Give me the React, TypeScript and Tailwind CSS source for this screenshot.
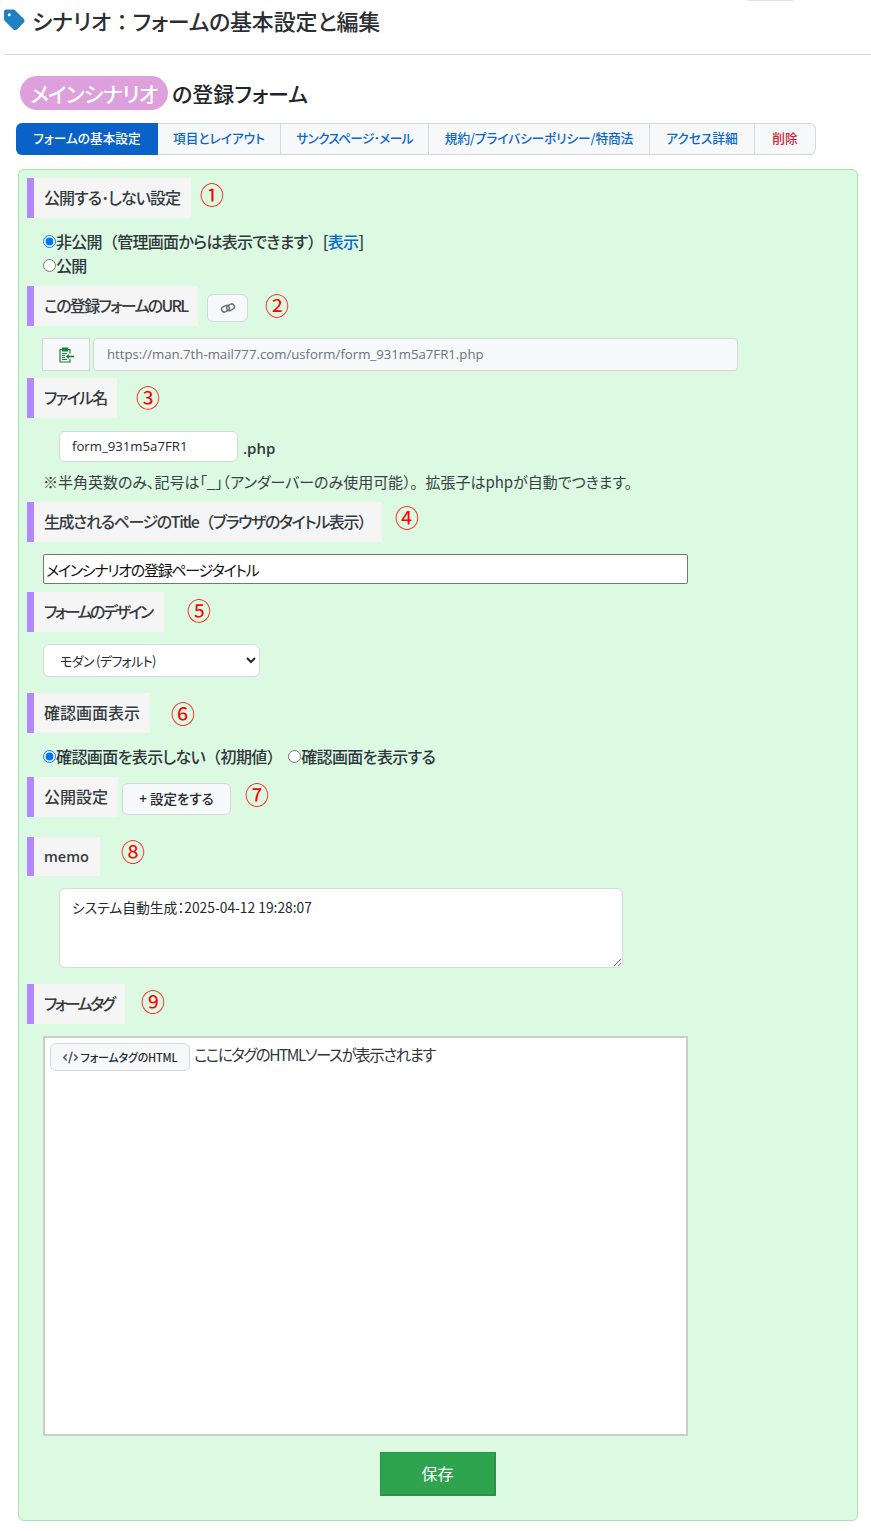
import React from "react";
import { FaTag, FaCode } from "react-icons/fa6";

const font = "[font-family:'Noto_Sans_CJK_JP','Open_Sans',sans-serif] [font-feature-settings:'palt']";

function Full({ children }: { children: string }) {
  return <span className="[font-feature-settings:normal]">{children}</span>;
}

function Num({ children, cls }: { children: string; cls: string }) {
  return <span className={`${cls} text-[24px] font-normal leading-none text-[#ff0000]`}>{children}</span>;
}

function Label({ label, w, h = "h-10", tone }: { label: React.ReactNode; w: string; h?: string; tone: string }) {
  return (
    <h4 className={`flex items-center ${w} ${h} shrink-0 whitespace-nowrap border-l-[7px] border-[#b388ff] bg-[#f5f5f5] pb-[3px] pl-[10px] font-medium leading-none text-[#333a40] ${tone}`}>{label}</h4>
  );
}

function Radio({ checked, name }: { checked?: boolean; name: string }) {
  return <input type="radio" name={name} defaultChecked={checked} className="m-0 h-[13px] w-[13px] shrink-0" />;
}

const tabs = [
  { t: "項目とレイアウト", c: "w-[123px]" },
  { t: "サンクスページ･メール", c: "w-[148px] tracking-[-0.7px]" },
  { t: "規約/プライバシーポリシー/特商法", c: "w-[221px] tracking-[-0.1px]" },
  { t: "アクセス詳細", c: "w-[105px]" },
];

export default function App() {
  return (
    <div className={`relative h-[1531px] w-[871px] overflow-hidden bg-white text-[#212529] ${font}`}>
      <div className="absolute left-[747px] top-0 h-px w-[46px] bg-[#dee2e6]" />
      <div className="flex h-[54px] items-start pl-[4px] pt-[8px]">
        <FaTag className="h-[24px] w-[21px] text-[#2080c0]" />
        <h1 className="-mt-[1px] ml-[7px] whitespace-nowrap text-[22px] font-medium leading-[26px] tracking-[-0.2px] text-[#2b2f33]">シナリオ<Full>：</Full>フォームの基本設定と編集</h1>
      </div>
      <div className="ml-[4px] h-px bg-[#d2d8de]" />

      <div className="ml-[20px] mt-[21px] flex h-[34px] items-center">
        <span className="flex h-[34px] w-[148px] items-center justify-center whitespace-nowrap rounded-[17px] bg-[#dda0dd] text-[21px] font-medium leading-none tracking-[-0.6px] text-white">メインシナリオ</span>
        <span className="ml-[4px] whitespace-nowrap text-[21px] font-medium leading-none text-[#212529]">の登録フォーム</span>
      </div>

      <nav className="ml-[16px] mt-[13px] flex h-[32px] w-[800px] text-[12.7px] font-medium leading-none">
        <a className="flex w-[142px] items-center justify-center rounded-l-[6px] bg-[#0a62c9] pb-[1px] text-white">フォームの基本設定</a>
        {tabs.map((tab) => (
          <a key={tab.t} className={`flex ${tab.c} items-center justify-center border-y border-r border-[#d5d9de] bg-[#f6f8fa] pb-[1px] text-[#0a66d0]`}>{tab.t}</a>
        ))}
        <a className="flex w-[61px] items-center justify-center rounded-r-[6px] border-y border-r border-[#d5d9de] bg-[#f6f8fa] pb-[1px] text-[#cf222e]">削除</a>
      </nav>

      <main className="ml-[18px] mt-[14px] h-[1352px] w-[840px] rounded-[6px] border border-[#a3e4b0] bg-[#dcf9e2] pl-[8px] pt-[8px]">
        <div className="flex items-start">
          <Label label="公開する･しない設定" w="w-[164px]" tone="text-[16px] tracking-[-0.9px]" />
          <Num cls="ml-[9px] mt-[4px]">①</Num>
        </div>
        <div className="ml-[16px] mt-[11px] text-[16px] font-medium leading-[24px] tracking-[-0.7px] text-[#30363c]">
          <label className="flex items-center whitespace-nowrap"><Radio checked name="pub" /><span>非公開<Full>（</Full>管理画面からは表示できます<Full>）</Full>[<a className="text-[#0a66d0]">表示</a>]</span></label>
          <label className="flex items-center"><Radio name="pub" /><span>公開</span></label>
        </div>

        <div className="mt-[9px] flex items-start">
          <Label label="この登録フォームのURL" w="w-[171px]" tone="text-[16px] tracking-[-1.7px]" />
          <button className="ml-[9px] mt-[8px] flex h-[28px] w-[41px] items-center justify-center rounded-[6px] border border-[#d5d9de] bg-[#f6f8fa]">
            <svg viewBox="0 0 16 12" className="h-[12px] w-[16px]" fill="none" stroke="#6a737d" strokeWidth="1.5">
              <rect x="1.5" y="4" width="8" height="5.4" rx="2.7" transform="rotate(-28 5.5 6.7)" />
              <rect x="6.5" y="2.6" width="8" height="5.4" rx="2.7" transform="rotate(-28 10.5 5.3)" />
            </svg>
          </button>
          <Num cls="ml-[17px] mt-[7px]">②</Num>
        </div>

        <div className="ml-[15px] mt-[12px] flex h-[33px]">
          <button className="flex w-[48px] items-center justify-center border border-[#d5d9de] bg-[#f6f8fa]">
            <svg viewBox="0 0 15 16" className="h-[16px] w-[15px]" fill="none" stroke="#1a7f37" strokeWidth="1.2">
              <path d="M3.5 2.5H1v12.5h10v-3M8.5 2.5H11v4" />
              <path d="M3.5 1.2h5v2.6h-5z" fill="#1a7f37" />
              <path d="M3 6.5h5M3 8.5h3M3 10.5h3M3 12.5h5" strokeWidth="1" />
              <path d="M15 9.5H8.5" strokeWidth="1.6" />
              <path d="M9.8 7 6.8 9.5l3 2.5z" fill="#1a7f37" stroke="none" />
            </svg>
          </button>
          <input readOnly value="https://man.7th-mail777.com/usform/form_931m5a7FR1.php" className="ml-[3px] w-[645px] rounded-[4px] border border-[#d5d9de] bg-[#f6f8fa] pl-[13px] text-[13.2px] text-[#6a737d] [font-family:'Open_Sans',sans-serif]" />
        </div>

        <div className="mt-[7px] flex items-start">
          <Label label="ファイル名" w="w-[90px]" tone="text-[16px] tracking-[-1.8px]" />
          <Num cls="ml-[19px] mt-[7px]">③</Num>
        </div>

        <div className="ml-[32px] mt-[13px] flex items-end">
          <input readOnly value="form_931m5a7FR1" className="h-[31px] w-[179px] rounded-[6px] border border-[#d5d9de] bg-white pb-[2px] pl-[12px] text-[13.2px] text-[#24292f] [font-family:'Open_Sans',sans-serif]" />
          <span className="mb-[2px] ml-[5px] text-[15px] font-semibold leading-[24px] text-[#30363c] [font-family:'Open_Sans',sans-serif]">.php</span>
        </div>
        <p className="ml-[16px] mt-[10px] whitespace-nowrap text-[15px] leading-[20px] tracking-[-0.02px] text-[#3a4046]">※半角英数のみ、記号は「_」<Full>（</Full>アンダーバーのみ使用可能<Full>）。</Full>拡張子はphpが自動でつきます。</p>

        <div className="mt-[10px] flex items-start">
          <Label label={<>生成されるページのTitle<Full>（</Full>ブラウザのタイトル表示<Full>）</Full></>} w="w-[355px]" tone="text-[16px] tracking-[-1.4px]" />
          <Num cls="ml-[13px] mt-[3px]">④</Num>
        </div>

        <input readOnly value="メインシナリオの登録ページタイトル" className="ml-[16px] mt-[12px] block h-[30px] w-[645px] rounded-[2px] border border-[#767676] bg-white pl-[2px] text-[15px] tracking-[-1.3px] text-[#111]" />

        <div className="mt-[8px] flex items-start">
          <Label label="フォームのデザイン" w="w-[137px]" tone="text-[16px] tracking-[-2.5px]" />
          <Num cls="ml-[23px] mt-[6px]">⑤</Num>
        </div>

        <select defaultValue="modern" className="ml-[16px] mt-[12px] block h-[33px] w-[217px] rounded-[6px] border border-[#d5d9de] bg-white pl-[12px] text-[13px] tracking-[-0.65px] text-[#24292f]">
          <option value="modern">モダン (デフォルト)</option>
        </select>

        <div className="mt-[16px] flex items-start">
          <Label label="確認画面表示" w="w-[123px]" tone="text-[16px]" />
          <Num cls="ml-[21px] mt-[8px]">⑥</Num>
        </div>

        <div className="ml-[16px] mt-[13px] flex h-[20px] items-center whitespace-nowrap text-[16px] font-medium leading-none tracking-[-0.6px] text-[#30363c]">
          <Radio checked name="confirm" /><span>確認画面を表示しない<Full>（</Full>初期値<Full>）</Full></span>
          <span className="ml-[6px] flex items-center"><Radio name="confirm" /></span><span>確認画面を表示する</span>
        </div>

        <div className="mt-[11px] flex items-start">
          <Label label="公開設定" w="w-[91px]" tone="text-[16px]" />
          <button className="ml-[4px] mt-[6px] flex h-[32px] w-[109px] items-center justify-center whitespace-nowrap rounded-[6px] border border-[#d5d9de] bg-[#f6f8fa] pb-[2px] text-[13.5px] font-medium text-[#24292f]">+ 設定をする</button>
          <Num cls="ml-[14px] mt-[5px]">⑦</Num>
        </div>

        <div className="mt-[20px] flex items-start">
          <Label label="memo" w="w-[73px]" h="h-[39px]" tone="pt-[4px] text-[14.5px] font-semibold [font-family:'Open_Sans',sans-serif]" />
          <Num cls="ml-[21px] mt-[2px]">⑧</Num>
        </div>

        <textarea readOnly value="システム自動生成：2025-04-12 19:28:07" className="ml-[32px] mt-[12px] block h-[80px] w-[564px] rounded-[6px] border border-[#d5d9de] bg-white pl-[12px] pt-[8px] text-[13.8px] leading-[20px] text-[#24292f]" />

        <div className="mt-[16px] flex items-start">
          <Label label="フォームタグ" w="w-[98px]" tone="text-[16px] tracking-[-2.5px]" />
          <Num cls="ml-[16px] mt-[5px]">⑨</Num>
        </div>

        <div className="ml-[16px] mt-[12px] flex h-[400px] w-[645px] items-start border-2 border-[#cccccc] bg-white pl-[5px] pt-[5px]">
          <button className="flex h-[28px] w-[140px] items-center justify-center whitespace-nowrap rounded-[6px] border border-[#d5d9de] bg-[#f6f8fa] text-[11px] font-medium tracking-[-0.2px] text-[#24292f]"><FaCode className="mr-[3px] h-[15px] w-[15px] text-[#57606a]" />フォームタグのHTML</button>
          <span className="ml-[4px] text-[15.5px] leading-[22px] tracking-[-1.5px] text-[#30363c]">ここにタグのHTMLソースが表示されます</span>
        </div>

        <div className="mt-[16px] flex justify-center pr-[9px]">
          <button className="flex h-[44px] w-[116px] items-center justify-center border-b-2 border-l border-r-2 border-t border-[#2a9148] bg-[#2ea44f] pb-[2px] pl-[1px] text-[16px] text-white">保存</button>
        </div>
      </main>
    </div>
  );
}
